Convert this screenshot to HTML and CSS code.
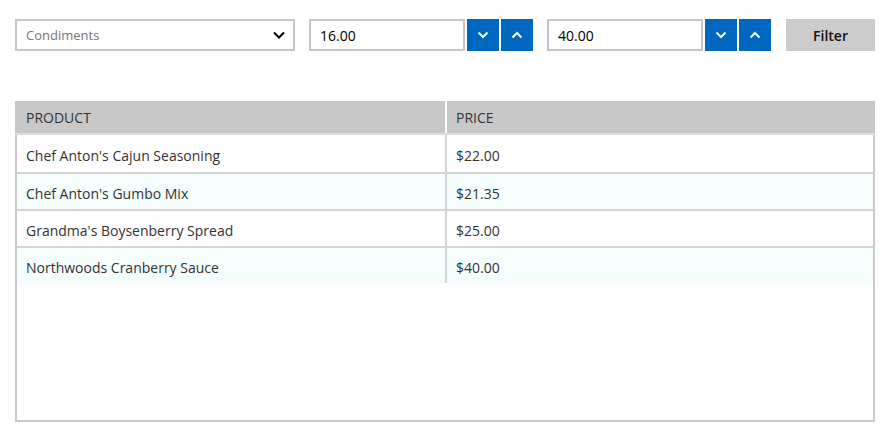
FILE: index.html
```html
<!DOCTYPE html>
<html>
<head>
<meta charset="utf-8">
<link rel="stylesheet" href="styles.css">
</head>
<body>
<div class="toolbar">
  <div class="select">
    <span class="select-text">Condiments</span>
    <svg class="select-chev" width="12" height="8" viewBox="0 0 12 8"><path d="M1 1.5 L6 6.5 L11 1.5" fill="none" stroke="#000" stroke-width="2"/></svg>
  </div>
  <div class="spinner">
    <div class="num">16.00</div>
    <button class="spin"><svg width="12" height="8" viewBox="0 0 12 8"><path d="M1.5 1.5 L6 6 L10.5 1.5" fill="none" stroke="#fff" stroke-width="2"/></svg></button>
    <button class="spin"><svg width="12" height="8" viewBox="0 0 12 8"><path d="M1.5 6.5 L6 2 L10.5 6.5" fill="none" stroke="#fff" stroke-width="2"/></svg></button>
  </div>
  <div class="spinner">
    <div class="num">40.00</div>
    <button class="spin"><svg width="12" height="8" viewBox="0 0 12 8"><path d="M1.5 1.5 L6 6 L10.5 1.5" fill="none" stroke="#fff" stroke-width="2"/></svg></button>
    <button class="spin"><svg width="12" height="8" viewBox="0 0 12 8"><path d="M1.5 6.5 L6 2 L10.5 6.5" fill="none" stroke="#fff" stroke-width="2"/></svg></button>
  </div>
  <button class="filter">Filter</button>
</div>
<div class="grid">
  <div class="row head">
    <div class="cell c1">PRODUCT</div>
    <div class="cell c2">PRICE</div>
  </div>
  <div class="row first">
    <div class="cell c1">Chef Anton's Cajun Seasoning</div>
    <div class="cell c2">$22.00</div>
  </div>
  <div class="row alt">
    <div class="cell c1">Chef Anton's Gumbo Mix</div>
    <div class="cell c2">$21.35</div>
  </div>
  <div class="row">
    <div class="cell c1">Grandma's Boysenberry Spread</div>
    <div class="cell c2">$25.00</div>
  </div>
  <div class="row alt">
    <div class="cell c1">Northwoods Cranberry Sauce</div>
    <div class="cell c2">$40.00</div>
  </div>
</div>
</body>
</html>
```
FILE: styles.css
```css
html, body {
  margin: 0;
  padding: 0;
  background: #fff;
}
body {
  font-family: "Open Sans", "Noto Sans", sans-serif;
  color: #333;
  width: 892px;
}
.toolbar {
  display: flex;
  align-items: center;
  padding: 19px 0 0 15px;
  height: 32px;
}
.select {
  box-sizing: border-box;
  width: 280px;
  height: 32px;
  border: 2px solid #c6c6c6;
  display: flex;
  align-items: center;
  justify-content: space-between;
  padding: 0 8px 0 9px;
}
.select-text {
  font-size: 13px;
  color: #777;
}
.select-chev {
  display: block;
}
.spinner {
  display: flex;
  align-items: center;
  margin-left: 14px;
}
.spinner + .spinner {
  margin-left: 14px;
}
.num {
  box-sizing: border-box;
  width: 156px;
  height: 32px;
  border: 2px solid #c6c6c6;
  font-size: 14px;
  color: #000;
  padding: 0 9px;
  display: flex;
  align-items: center;
}
.spin {
  width: 32px;
  height: 32px;
  border: 0;
  padding: 0;
  margin: 0 0 0 2px;
  background: #0067c0;
  display: flex;
  align-items: center;
  justify-content: center;
}
.spin svg {
  display: block;
}
.filter {
  margin-left: 15px;
  width: 89px;
  height: 32px;
  border: 0;
  background: #cccccc;
  font-family: "Open Sans", sans-serif;
  font-size: 14px;
  font-weight: 600;
  color: #111;
  padding: 0;
}
.grid {
  box-sizing: border-box;
  margin: 50px 0 0 15px;
  width: 860px;
  height: 321px;
  border: 2px solid #cbcbcb;
  border-top: 0;
}
.row {
  display: flex;
  height: 35px;
  border-top: 2px solid #d4d4d4;
}
.row.head {
  height: 32px;
  border-top: 0;
  margin: 0 -2px;
  background: #c8c8c8;
  border-bottom: 2px solid #dedede;
}
.row.first {
  border-top: 0;
  height: 37px;
}
.row.alt {
  background: #f5fdfd;
}
.cell {
  display: flex;
  align-items: center;
  font-size: 14px;
  padding-left: 9px;
  box-sizing: border-box;
}
.row:not(.head) .cell {
  padding-top: 3px;
}
.c1 {
  width: 430px;
  border-right: 2px solid #d4d4d4;
}
.c2 {
  flex: 1;
}
.head .c1 {
  width: 432px;
  padding-left: 11px;
  border-right: 2px solid #fff;
}
```
